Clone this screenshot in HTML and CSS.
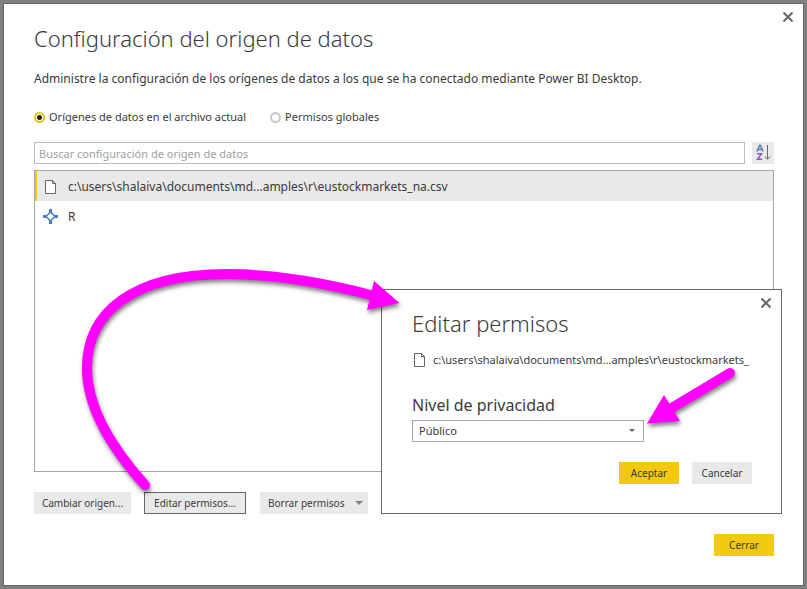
FILE: index.html
```html
<!DOCTYPE html>
<html lang="es">
<head>
<meta charset="utf-8">
<title>Configuración del origen de datos</title>
<link rel="stylesheet" href="styles.css">
</head>
<body>
<main class="window">
  <button class="close" type="button" aria-label="Cerrar ventana">
    <svg viewBox="0 0 10 10"><path d="M0.500 0.500L9.500 9.500M9.500 0.500L0.500 9.500"/></svg>
  </button>
  <h1 class="title">Configuración del origen de datos</h1>
  <p class="intro">Administre la configuración de los orígenes de datos a los que se ha conectado mediante Power BI Desktop.</p>
  <div class="scope">
    <label class="option"><input type="radio" name="scope" checked>Orígenes de datos en el archivo actual</label>
    <label class="option"><input type="radio" name="scope">Permisos globales</label>
  </div>
  <div class="search">
    <input class="search-box" type="text" aria-label="Buscar" placeholder="Buscar configuración de origen de datos">
    <button class="sort" type="button" aria-label="Ordenar">
      <svg viewBox="0 0 22 22">
        <path class="sort-a" d="M5 9.500L7.500 3.500H8.500L11 9.500M6 7.500H10"/>
        <path class="sort-z" d="M5 11.700H9.500L5.500 17.300H10.300"/>
        <path class="sort-arrow" d="M15.500 3V17M12.800 14.500L15.500 17.200L18.200 14.500"/>
      </svg>
    </button>
  </div>
  <ul class="sources">
    <li class="source selected">
      <svg class="icon" viewBox="0 0 16 16"><path class="page" d="M2.500 1.500H9.500L12.500 4.500V14.500H2.500ZM9.500 1.500V4.500H12.500"/></svg>
      <span>c:\users\shalaiva\documents\md...amples\r\eustockmarkets_na.csv</span>
    </li>
    <li class="source">
      <svg class="icon" viewBox="0 0 16 16"><path class="node" d="M7.500 3L12 7.500L7.500 12L3 7.500Z"/><path class="node-tips" d="M6 0h3v3.500H6zM6 11.500h3V15H6zM0 6h3.500v3H0zM11.500 6H15v3h-3.500z"/></svg>
      <span>R</span>
    </li>
  </ul>
  <div class="actions">
    <button class="button change" type="button">Cambiar origen...</button>
    <button class="button edit" type="button">Editar permisos...</button>
    <button class="button clear" type="button">Borrar permisos<span class="caret"></span></button>
  </div>
  <div class="footer"><button class="button primary" type="button">Cerrar</button></div>

  <section class="dialog" role="dialog" aria-labelledby="dialog-title">
    <button class="close" type="button" aria-label="Cerrar cuadro">
      <svg viewBox="0 0 10 10"><path d="M0.500 0.500L9.500 9.500M9.500 0.500L0.500 9.500"/></svg>
    </button>
    <h2 class="dialog-title" id="dialog-title">Editar permisos</h2>
    <div class="file">
      <svg class="icon" viewBox="0 0 16 16"><path class="page" d="M2.500 1.500H9.500L12.500 4.500V14.500H2.500ZM9.500 1.500V4.500H12.500"/></svg>
      <span>c:\users\shalaiva\documents\md...amples\r\eustockmarkets_</span>
    </div>
    <label class="level" for="level">Nivel de privacidad</label>
    <div class="select">
      <select id="level"><option>Público</option></select>
      <span class="caret small"></span>
    </div>
    <div class="dialog-actions">
      <button class="button primary" type="button">Aceptar</button>
      <button class="button" type="button">Cancelar</button>
    </div>
  </section>

  <svg class="arrows" width="720" height="240" viewBox="80 260 720 240" aria-hidden="true">
    <path class="shaft" d="M145 485C108 444 87 405 87 368C87 313 132 274 227 274C275 274 325 283 371 295"/>
    <path class="head" d="M374 281L399.500 303L367 310Z"/>
    <path class="shaft" d="M730 373L670 409"/>
    <path class="head" d="M647 423.500L664 395L680 421Z"/>
  </svg>
</main>
</body>
</html>
```
FILE: styles.css
```css
* { box-sizing: border-box; }

body {
  display: flex;
  min-height: 100vh;
  margin: 0;
  padding: 3px;
  background: #808080;
  color: #3a3a3a;
  font: 12px/16px "Noto Sans", "Open Sans", sans-serif;
}

button, input, select { font: inherit; color: inherit; }

.window {
  position: relative;
  flex: 1;
  display: flex;
  flex-direction: column;
  padding: 16px 29px 29px 30px;
  border: 1px solid #666;
  background: #fff;
}

.close {
  position: absolute;
  top: 8px;
  right: 10px;
  width: 10px;
  height: 10px;
  padding: 0;
  border: 0;
  background: none;
}
.close svg { display: block; fill: none; stroke: #666; stroke-width: 2; }

.title { margin: 0; font-size: 22px; line-height: 36px; font-weight: 300; }
.intro { margin: 14px 0 0; line-height: 18px; }

.scope { display: flex; gap: 24px; margin-top: 21px; }
.option { display: flex; align-items: center; gap: 4px; font-size: 11px; }
.option input {
  appearance: none;
  width: 11px;
  height: 11px;
  margin: 0;
  border: 2px solid #c8c8c8;
  border-radius: 50%;
}
.option input:checked {
  border-color: #e8c620;
  background: radial-gradient(circle, #222 2px, #fff 3px);
}

.search { display: flex; gap: 7px; margin-top: 17px; }
.search-box { flex: 1; min-width: 0; height: 22px; padding: 0 4px; border: 1px solid #bbb; font-size: 11px; }
.search-box::placeholder { color: #a0a0a0; }
.sort { width: 22px; height: 22px; padding: 0; border: 0; background: #e9e9e9; }
.sort svg { display: block; fill: none; }
.sort-a { stroke: #4a7ebb; stroke-width: 1.5; }
.sort-z { stroke: #8a5cb8; stroke-width: 1.5; }
.sort-arrow { stroke: #666; }

.sources { flex: 1; margin: 6px 0 0; padding: 0; border: 1px solid #a6a6a6; list-style: none; }
.source { display: flex; align-items: center; gap: 9px; height: 30px; padding: 1px 0 0 6px; border-left: 2px solid transparent; }
.selected { border-left-color: #f2c811; background: #e9e9e9; }
.icon { flex: none; width: 16px; height: 16px; fill: none; }
.page { fill: #fff; stroke: #666; }
.node { stroke: #4a7ebb; stroke-width: 1.5; }
.node-tips { fill: #4a7ebb; }

.actions { display: flex; margin-top: 20px; }
.button {
  min-width: 60px;
  height: 22px;
  padding: 0 8px;
  border: 0;
  background: #e9e9e9;
  font-size: 10px;
  line-height: 22px;
  white-space: nowrap;
}
.change { width: 97px; padding: 0; }
.edit { width: 102px; margin-left: 13px; padding: 0; border: 1px solid #666; line-height: 20px; }
.clear { display: flex; align-items: center; justify-content: space-between; width: 108px; margin-left: 14px; padding: 0 5px 0 8px; }
.primary { background: #f2c811; }
.caret { border: 4px solid transparent; border-top-color: #808080; border-bottom: 0; }
.small { border-width: 3px 3px 0; border-top-color: #666; }
.footer { display: flex; justify-content: flex-end; margin-top: 20px; }

.dialog {
  position: absolute;
  right: 21px;
  bottom: 71px;
  width: 401px;
  padding: 17px 29px 29px 30px;
  border: 1px solid #666;
  background: #fff;
}
.dialog-title { margin: 0; font-size: 22px; line-height: 32px; font-weight: 300; }
.file { display: flex; align-items: center; gap: 5px; margin-top: 13px; font-size: 11px; white-space: nowrap; }
.level { display: block; margin-top: 25px; font-size: 16px; line-height: 24px; }
.select { position: relative; width: 232px; margin-top: 3px; }
.select select { display: block; appearance: none; width: 100%; height: 22px; padding: 0 6px; border: 1px solid #a6a6a6; border-radius: 0; background: #fff; font-size: 11px; }
.select .caret { position: absolute; top: 9px; right: 9px; pointer-events: none; }
.dialog-actions { display: flex; justify-content: flex-end; gap: 13px; margin-top: 20px; }

.arrows { position: absolute; top: 256px; left: 76px; pointer-events: none; filter: drop-shadow(1px 3px 2px rgba(0, 0, 0, .5)); }
.shaft { fill: none; stroke: #f0f; stroke-width: 10; stroke-linecap: round; }
.head { fill: #f0f; }
```
